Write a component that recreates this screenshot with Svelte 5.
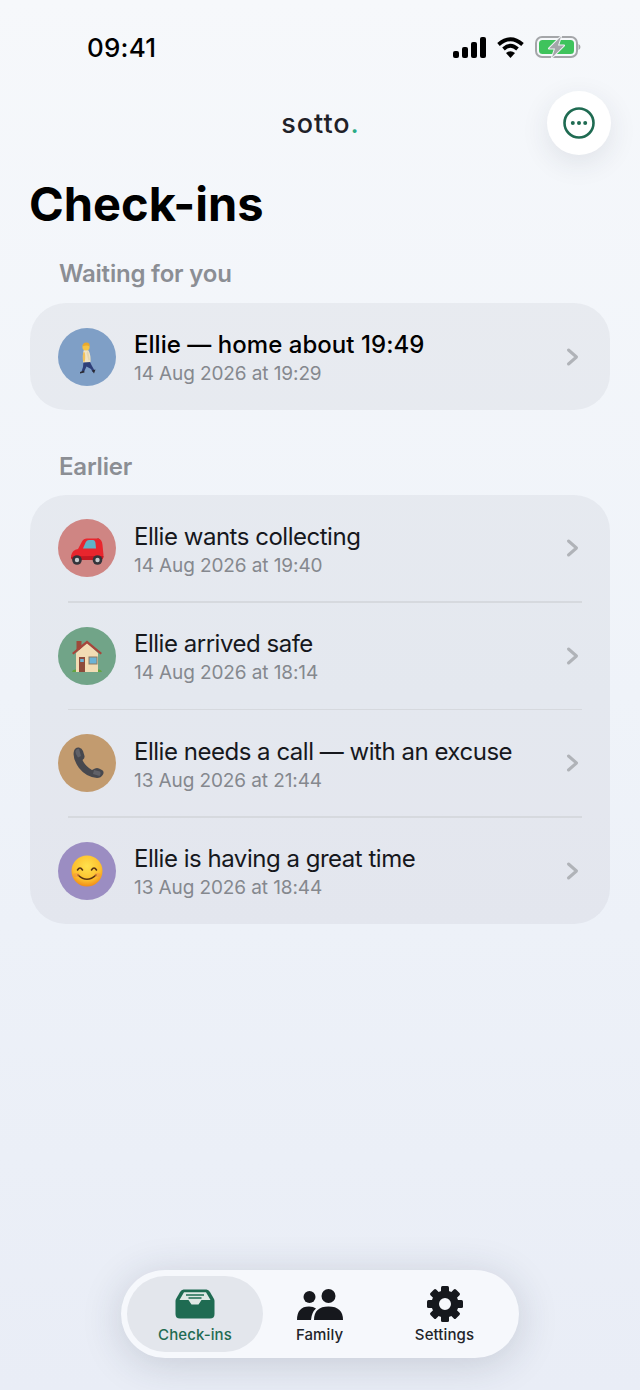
<script lang="ts">
  const earlier = [
    { icon: 'car', color: '#cf8583', title: 'Ellie wants collecting', date: '14 Aug 2026 at 19:40' },
    { icon: 'house', color: '#71a488', title: 'Ellie arrived safe', date: '14 Aug 2026 at 18:14' },
    { icon: 'phone', color: '#c29b6f', title: 'Ellie needs a call — with an excuse', date: '13 Aug 2026 at 21:44' },
    { icon: 'smile', color: '#9b8dc2', title: 'Ellie is having a great time', date: '13 Aug 2026 at 18:44' }
  ];
  const teeth = [0, 45, 90, 135, 180, 225, 270, 315];
</script>

{#snippet glyph(icon)}
  <svg width="40" height="40" viewBox="0 0 40 40" aria-hidden="true">
    {#if icon === 'walk'}
      <path d="M16.5 24 L16 30 L14.5 34.5 L17 35 L19.5 29.5 L24 32 L25.5 35 L27.5 33.5 L25 29 L22.5 24 Z" fill="#2f3f78" />
      <path d="M13 35 L17 33.5 L17.5 35.5 L13 36.5 Z M25 33.5 L28.5 32.5 L27 36.5 Z" fill="#2b2a33" />
      <path d="M16.5 13.5 Q19 12 21.5 13.5 Q24 18 23.5 25 L16 25.5 Q15.5 19 16.5 13.5 Z" fill="#efe3c4" />
      <path d="M21 14 L23 23 L21.5 23.5 L19.5 16 Z" fill="#e6d6ae" />
      <ellipse cx="17" cy="20" rx="1.2" ry="5" fill="#f2c25c" />
      <circle cx="19" cy="10" r="3.6" fill="#f6c445" />
      <path d="M15.4 9.5 Q15.8 5.4 19.5 5.5 Q23 5.7 22.6 9.5 Q20 7.5 15.4 9.5 Z" fill="#e9a92e" />
    {:else if icon === 'car'}
      <path d="M31 10 L31.6 15" stroke="#a8322f" stroke-width="1" />
      <path d="M4 28 Q5 22 11 21 L15 13.5 Q16.5 10.5 20 10.5 H31 Q35 11 35.5 17 L36.5 27 Q36.5 32 33 32 H7 Q4 32 4 28 Z" fill="#e8252d" />
      <path d="M16 20.5 L18.8 14 Q19.8 12 22 12 H26 Q28 12 28.5 15 L29 20.5 Z" fill="#62b2c6" />
      <path d="M4 29 Q12 27.5 36.5 28 Q36.5 32 33 32 H7 Q4 32 4 29 Z" fill="#c41822" />
      <circle cx="10" cy="32" r="4.8" fill="#34343a" /><circle cx="10" cy="32" r="2.2" fill="#c7c9cc" />
      <circle cx="30.5" cy="32" r="4.8" fill="#34343a" /><circle cx="30.5" cy="32" r="2.2" fill="#c7c9cc" />
    {:else if icon === 'house'}
      <rect x="9.5" y="5" width="5" height="9" fill="#9d4a3a" />
      <path d="M20 7 L31 17 V36 H9 V17 Z" fill="#f2dcb4" />
      <path d="M20 4.5 L35 17 L33.5 18.5 L20 7.5 L6.5 18.5 L5 17 Z" fill="#a8453a" />
      <rect x="12" y="21" width="6" height="15" fill="#8d4a3a" />
      <rect x="13.2" y="23" width="3.6" height="3" fill="#6cb3d6" />
      <rect x="22" y="21" width="8" height="7" fill="#6cb3d6" stroke="#8d7a62" stroke-width="1" />
      <path d="M5 36 Q5.5 33 9 33.5 V36 Z M31 36 V33.5 Q34.5 33 35 36 Z" fill="#63a53d" />
    {:else if icon === 'phone'}
      <path d="M7 8 Q8 4 12 4.5 Q15 5 16 8 L17.5 13 Q18 15.5 15.5 17 Q18 23 25 27 L28 25.5 Q30 24.5 32 25.5 L35 27 Q37.5 28.5 36 31.5 Q34 35 30 35 Q19 34 12 25 Q5 15 7 8 Z" fill="#47484e" />
      <path d="M8.5 8 Q9.5 5.5 12 5.8 L14 13 L11 14.5 Q8 11 8.5 8 Z M27 27 L33 28.5 Q34.5 30.5 32.5 33 L26 31 Z" fill="#606168" />
    {:else}
      <defs>
        <radialGradient id="face" cx="50%" cy="35%" r="65%">
          <stop offset="0%" stop-color="#ffe14d" />
          <stop offset="70%" stop-color="#fdbf2d" />
          <stop offset="100%" stop-color="#f18c17" />
        </radialGradient>
      </defs>
      <circle cx="20" cy="20" r="15.5" fill="url(#face)" />
      <path d="M10.5 19 Q13 15 15.5 19 M24.5 19 Q27 15 29.5 19" fill="none" stroke="#5b3312" stroke-width="1.6" stroke-linecap="round" />
      <path d="M11 24 Q20 32.5 29 24" fill="none" stroke="#5b3312" stroke-width="1.6" stroke-linecap="round" />
      <ellipse cx="9.5" cy="24" rx="3" ry="2" fill="#f58a4a" opacity=".45" />
      <ellipse cx="30.5" cy="24" rx="3" ry="2" fill="#f58a4a" opacity=".45" />
    {/if}
  </svg>
{/snippet}

{#snippet row(icon, color, title, date, strong)}
  <div class="row">
    <div class="avatar" style="background: {color}">{@render glyph(icon)}</div>
    <div class="text">
      <div class="title" class:strong>{title}</div>
      <div class="date">{date}</div>
    </div>
    <svg class="chevron" width="14" height="20" viewBox="0 0 14 20" fill="none" stroke="#b0b3b8" stroke-width="3" stroke-linecap="round" stroke-linejoin="round">
      <path d="M2.5 3 L10.5 10 L2.5 17" />
    </svg>
  </div>
{/snippet}

<div class="screen">
  <div class="status">
    <span class="time">09:41</span>
    <div class="status-icons">
      <svg width="33" height="21" viewBox="0 0 33 21" fill="#000">
        <rect x="0" y="14" width="6" height="7" rx="2" />
        <rect x="9" y="10" width="6" height="11" rx="2" />
        <rect x="18" y="5" width="6" height="16" rx="2" />
        <rect x="27" y="0" width="6" height="21" rx="2" />
      </svg>
      <svg width="27" height="21" viewBox="0 0 27 21" fill="none" stroke="#000" stroke-width="3.8">
        <path d="M1.5 7.5 Q13.5 -3 25.5 7.5" />
        <path d="M6.5 12 Q13.5 5.5 20.5 12" />
        <path d="M13.5 21 L9 16 Q13.5 12.4 18 16 Z" fill="#000" stroke="none" />
      </svg>
      <svg width="46" height="22" viewBox="0 0 46 22">
        <rect x="1" y="1" width="41" height="20" rx="6" fill="none" stroke="#a4a6a9" stroke-width="2" />
        <rect x="4" y="4" width="35" height="14" rx="3.5" fill="#3fc35c" />
        <path d="M43.5 8 Q45.5 9 45.5 11 Q45.5 13 43.5 14 Z" fill="#a4a6a9" />
        <path d="M26 0.5 L14 12.5 H20 L17 21.5 L29 9.5 H23 Z" fill="#a4a6a9" stroke="#f1f3f6" stroke-width="2" stroke-linejoin="round" paint-order="stroke" />
      </svg>
    </div>
  </div>

  <header class="topbar">
    <span></span>
    <div class="logo">sotto<span class="dot">.</span></div>
    <button class="more" aria-label="More">
      <svg width="32" height="32" viewBox="0 0 32 32" fill="none">
        <circle cx="16" cy="16" r="14.5" stroke="#1f6b52" stroke-width="2.6" />
        <circle cx="9.8" cy="16" r="2" fill="#1f6b52" />
        <circle cx="16" cy="16" r="2" fill="#1f6b52" />
        <circle cx="22.2" cy="16" r="2" fill="#1f6b52" />
      </svg>
    </button>
  </header>

  <h1>Check-ins</h1>

  <h2>Waiting for you</h2>
  <section class="card first">
    {@render row('walk', '#7f9fc6', 'Ellie — home about 19:49', '14 Aug 2026 at 19:29', true)}
  </section>

  <h2>Earlier</h2>
  <section class="card list">
    {#each earlier as item}
      {@render row(item.icon, item.color, item.title, item.date, false)}
    {/each}
  </section>

  <nav class="tabs">
    <div class="tab active">
      <div class="tab-icon">
        <svg width="40" height="30" viewBox="0 0 40 30">
          <path d="M8.5 0.5 H31.5 Q33.5 0.5 35 3 L39 10 Q39.5 11 39.5 12 V25 Q39.5 29.5 35 29.5 H5 Q0.5 29.5 0.5 25 V12 Q0.5 11 1 10 L5 3 Q6.5 0.5 8.5 0.5 Z" fill="#1f6b52" />
          <path d="M9 3.2 H31 L35.5 11 H26.5 L23.5 15.5 H16.5 L13.5 11 H4.5 Z" fill="#dfe8e5" />
          <path d="M11 6 H29 M13.5 9 H26.5" stroke="#1f6b52" stroke-width="1.5" />
        </svg>
      </div>
      <span>Check-ins</span>
    </div>
    <div class="tab">
      <div class="tab-icon">
        <svg width="46" height="31" viewBox="0 0 46 31" fill="#16181d">
          <circle cx="12.5" cy="8" r="6" />
          <circle cx="31.5" cy="7" r="7" />
          <path d="M0 31 Q0 17.5 12 17.5 Q16.5 17.5 19 19.5 Q14.5 23.5 14 31 Z" />
          <path d="M17 31 Q17 17.5 31.5 17.5 Q46 17.5 46 31 Z" />
        </svg>
      </div>
      <span>Family</span>
    </div>
    <div class="tab">
      <div class="tab-icon">
        <svg width="36" height="36" viewBox="0 0 36 36" fill="#16181d">
          {#each teeth as angle}
            <rect x="14" y="0" width="8" height="8" rx="1.5" transform="rotate({angle} 18 18)" />
          {/each}
          <circle cx="18" cy="18" r="9.8" fill="none" stroke="#16181d" stroke-width="7.6" />
        </svg>
      </div>
      <span>Settings</span>
    </div>
  </nav>
</div>

<style>
  :global(body) {
    margin: 0;
    font-family: Inter, "Noto Sans", sans-serif;
  }

  .screen {
    height: 1390px;
    box-sizing: border-box;
    padding: 0 30px 32px;
    display: flex;
    flex-direction: column;
    background: linear-gradient(180deg, #f6f8fb 0%, #eff3f9 50%, #e9edf6 100%);
    overflow: hidden;
  }

  .status {
    display: flex;
    justify-content: space-between;
    align-items: center;
    height: 30px;
    margin-top: 32px;
    padding: 0 29px 0 57px;
  }

  .time {
    font-size: 26px;
    font-weight: 500;
    letter-spacing: 0.2px;
    color: #000;
  }

  .status-icons {
    display: flex;
    align-items: center;
    gap: 11px;
  }

  .topbar {
    display: grid;
    grid-template-columns: 1fr auto 1fr;
    align-items: center;
    margin-top: 29px;
    margin-right: -1px;
  }

  .logo {
    font-size: 27px;
    font-weight: 500;
    color: #1f2128;
    letter-spacing: 0.95px;
  }

  .dot {
    color: #2aab85;
  }

  .more {
    justify-self: end;
    width: 64px;
    height: 64px;
    padding: 0;
    border: 0;
    border-radius: 50%;
    background: #fff;
    display: flex;
    align-items: center;
    justify-content: center;
    box-shadow: 0 8px 28px rgba(40, 50, 70, 0.1);
  }

  h1 {
    margin: 20px 0 0 -1px;
    font-size: 47px;
    line-height: 58px;
    font-weight: 700;
    color: #000;
  }

  h2 {
    margin: 26px 0 0 29px;
    font-size: 24px;
    line-height: 30px;
    font-weight: 600;
    letter-spacing: -0.2px;
    color: #8b8e94;
  }

  .card {
    margin-top: 14px;
    border-radius: 36px;
    background: rgba(60, 65, 80, 0.06);
    display: flex;
    flex-direction: column;
  }

  .card.first {
    margin-bottom: 16px;
  }

  .card.first .row {
    height: 107px;
  }

  .card.list {
    margin-top: 13px;
  }

  .row {
    display: flex;
    align-items: center;
    height: 106px;
    padding: 0 28px;
    position: relative;
  }

  .row + .row {
    margin-top: 1.67px;
  }

  .row + .row::before {
    content: '';
    position: absolute;
    top: -1.67px;
    left: 38px;
    right: 28px;
    height: 1.67px;
    background: #d6d9de;
  }

  .avatar {
    width: 58px;
    height: 58px;
    border-radius: 50%;
    flex-shrink: 0;
    display: flex;
    align-items: center;
    justify-content: center;
  }

  .text {
    flex: 1;
    margin-left: 18px;
    padding-top: 4px;
  }

  .title {
    font-size: 24px;
    line-height: 30px;
    letter-spacing: -0.48px;
    color: #16181d;
  }

  .title.strong {
    font-weight: 500;
    letter-spacing: 0.04px;
    color: #000;
  }

  .date {
    font-size: 19px;
    line-height: 26px;
    letter-spacing: -0.1px;
    color: #85888e;
    margin-top: 1px;
  }

  .chevron {
    flex-shrink: 0;
    margin-right: 2px;
  }

  .tabs {
    margin-top: auto;
    align-self: center;
    width: 398px;
    height: 88px;
    box-sizing: border-box;
    padding: 6px;
    border-radius: 44px;
    background: #f6f8fc;
    display: grid;
    grid-template-columns: 136px 113px 1fr;
    box-shadow: 0 6px 40px rgba(40, 50, 70, 0.18);
  }

  .tab {
    display: flex;
    flex-direction: column;
    align-items: center;
    justify-content: flex-end;
    padding-bottom: 8px;
    gap: 4px;
    border-radius: 38px;
    color: #22242a;
    font-size: 15px;
    line-height: 18px;
    font-weight: 500;
    letter-spacing: 0.1px;
  }

  .tab-icon {
    height: 36px;
    display: flex;
    align-items: center;
  }

  .tab.active {
    background: #e3e6ec;
    color: #1f6b52;
  }
</style>
